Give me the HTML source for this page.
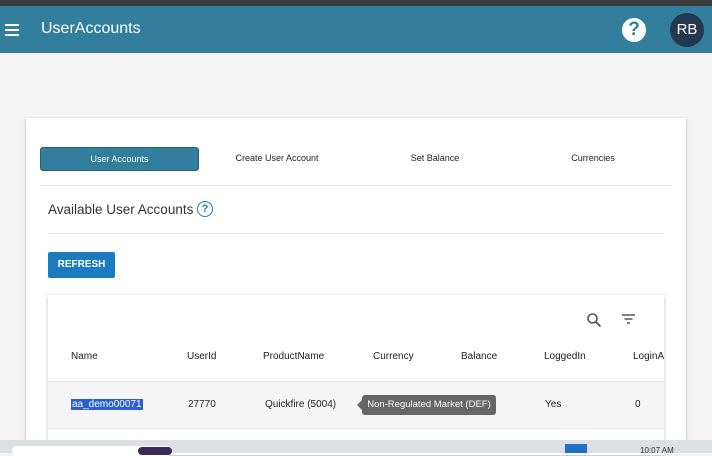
<!DOCTYPE html>
<html><head><style>
body{margin:0;width:712px;height:453px;overflow:hidden;background:#f4f4f4;font-family:"Liberation Sans",sans-serif;position:relative}
.a{position:absolute}
</style></head><body>
<div class="a" style="left:0;top:0;width:712px;height:6px;background:#3a3a3a"></div>
<div class="a" style="left:0;top:6px;width:712px;height:47px;background:#337e9c"></div>
<div class="a" style="left:5px;top:24px;width:14px;height:2px;background:#fff;box-shadow:0 5px 0 #fff,0 10px 0 #fff"></div>
<div class="a" style="left:41px;top:20px;color:#fff;font-size:16px">UserAccounts</div>
<div class="a" style="left:622px;top:18px;width:24px;height:24px;border-radius:50%;background:#fff;color:#337e9c;font-weight:bold;font-size:19px;text-align:center;line-height:24px">?</div>
<div class="a" style="left:670px;top:13px;width:34px;height:34px;border-radius:50%;background:#24384f;color:#fff;font-size:15px;text-align:center;line-height:34px">RB</div>
<div class="a" style="left:26px;top:118px;width:660px;height:330px;background:#fff;box-shadow:0 1px 3px rgba(0,0,0,.25)"></div>
<div class="a" style="left:40px;top:147px;width:157px;height:22px;background:#337e9c;border:1px solid #25607a;border-radius:3px;color:#fff;font-size:9px;text-align:center;line-height:22px">User Accounts</div>
<div class="a" style="left:198px;top:153px;width:158px;text-align:center;font-size:9px;color:#222">Create User Account</div>
<div class="a" style="left:356px;top:153px;width:158px;text-align:center;font-size:9px;color:#222">Set Balance</div>
<div class="a" style="left:514px;top:153px;width:158px;text-align:center;font-size:9px;color:#222">Currencies</div>
<div class="a" style="left:40px;top:185px;width:632px;height:1px;background:#e6e6e6"></div>
<div class="a" style="left:48px;top:202px;font-size:13.5px;color:#333">Available User Accounts</div>
<div class="a" style="left:197px;top:201px;width:14px;height:14px;border:1.5px solid #1a7bbf;border-radius:50%;color:#1a7bbf;font-size:11px;font-weight:bold;text-align:center;line-height:14px">?</div>
<div class="a" style="left:48px;top:233px;width:616px;height:1px;background:#e6e6e6"></div>
<div class="a" style="left:48px;top:252px;width:67px;height:26px;background:#1a7bbf;border-radius:2px;color:#fff;font-size:10px;font-weight:bold;text-align:center;line-height:26px">REFRESH</div>
<div class="a" style="left:48px;top:295px;width:616px;height:160px;background:#fff;box-shadow:0 1px 4px rgba(0,0,0,.25)"></div>
<svg class="a" style="left:586px;top:312px" width="16" height="16" viewBox="0 0 16 16"><circle cx="6.5" cy="6.5" r="4.5" fill="none" stroke="#555" stroke-width="1.6"/><path d="M10 10l4.5 4.5" stroke="#555" stroke-width="1.8"/></svg>
<svg class="a" style="left:621px;top:313px" width="15" height="12" viewBox="0 0 15 12"><path d="M1 2h13M3.5 6h8M6 10h3" stroke="#555" stroke-width="1.5"/></svg>
<div class="a" style="top:351px;left:0;width:712px;font-size:10px;color:#222">
<span class="a" style="left:71px">Name</span><span class="a" style="left:187px">UserId</span><span class="a" style="left:263px">ProductName</span><span class="a" style="left:373px">Currency</span><span class="a" style="left:461px">Balance</span><span class="a" style="left:544px">LoggedIn</span><span class="a" style="left:633px">LoginA</span></div>
<div class="a" style="left:48px;top:381px;width:616px;height:1px;background:#e6e6e6"></div>
<div class="a" style="left:48px;top:382px;width:616px;height:46px;background:#f5f5f5"></div>
<div class="a" style="left:48px;top:428px;width:616px;height:1px;background:#e6e6e6"></div>
<div class="a" style="top:399px;left:0;width:712px;font-size:10px;color:#222">
<span class="a" style="left:71px;background:#2a5fd0;color:#fff;padding:0 1px">aa_demo00071</span><span class="a" style="left:188px">27770</span><span class="a" style="left:265px">Quickfire (5004)</span><span class="a" style="left:545px">Yes</span><span class="a" style="left:635px">0</span></div>
<div class="a" style="left:362px;top:395px;width:134px;height:20px;background:#666;border-radius:3px;color:#fff;font-size:9.5px;text-align:center;line-height:20px">Non-Regulated Market (DEF)</div>
<div class="a" style="left:357px;top:400px;width:0;height:0;border:5px solid transparent;border-right-color:#666;border-left:0"></div>
<div class="a" style="left:0;top:440px;width:712px;height:13px;background:#dcdfe3"></div>
<div class="a" style="left:12px;top:446px;width:160px;height:10px;background:#fff;border-radius:6px"></div>
<div class="a" style="left:138px;top:447px;width:34px;height:8px;background:#3a2a5a;border-radius:4px"></div>
<div class="a" style="left:565px;top:444px;width:22px;height:9px;background:#1f6fc4"></div>
<div class="a" style="left:640px;top:446px;font-size:8px;color:#333">10:07 AM</div>
</body></html>
